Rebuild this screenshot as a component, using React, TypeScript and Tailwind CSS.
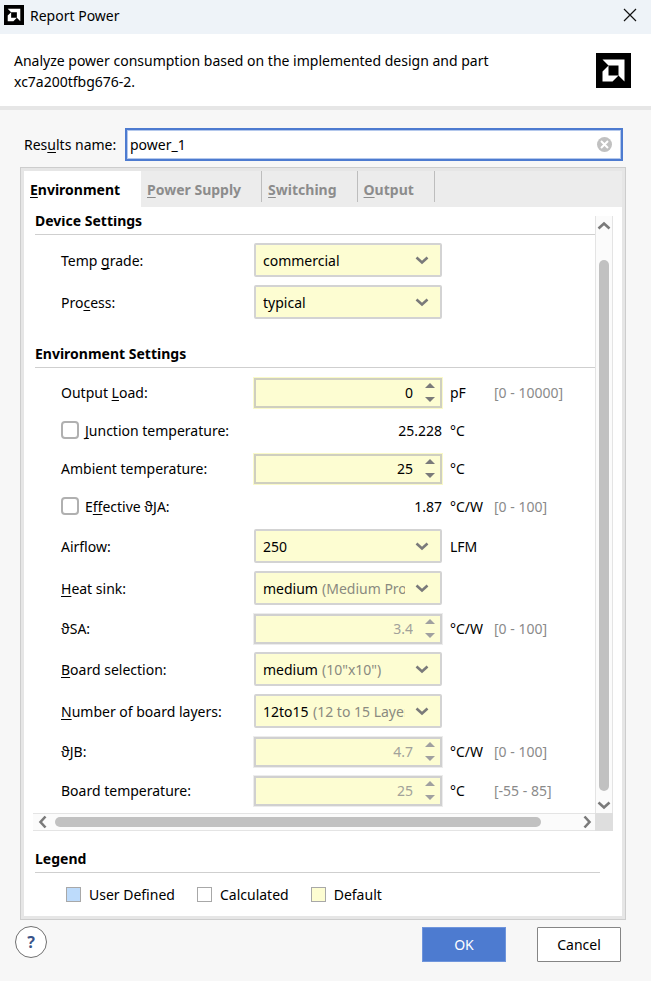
import { useState } from "react";
import type { ReactNode } from "react";

function Logo({ className }: { className: string }) {
  return (
    <svg viewBox="0 0 35 35" className={className} aria-hidden="true">
      <rect width="35" height="35" fill="#000" />
      <path d="M6.500 6.500h22v22l-6-6v-10h-10z" fill="#fff" />
      <path d="M12.500 12.500v10h10l-6 6h-10v-10z" fill="#fff" />
    </svg>
  );
}

function Chevron({ className }: { className: string }) {
  return (
    <svg viewBox="0 0 14 14" className={className} aria-hidden="true">
      <path d="M1.500 4.500 7 9.500l5.500-5" fill="none" stroke="#7a7a7a" strokeWidth="2.600" />
    </svg>
  );
}

/* Label text with its mnemonic letter wrapped in underscores: "Temp _g_rade:" */
function Mnemonic({ text }: { text: string }) {
  const [before, key, after] = text.split("_");
  return (
    <>
      {before}
      {key && <span className="underline [text-decoration-skip-ink:none] underline-offset-2">{key}</span>}
      {after}
    </>
  );
}

function Row({
  id,
  label,
  unit,
  range,
  height,
  children,
}: {
  id: string;
  label: string;
  unit?: string;
  range?: string;
  height: string;
  children: ReactNode;
}) {
  return (
    <div className={`grid grid-cols-[193px_188px_44px_1fr] pl-[26px] ${height}`}>
      <label htmlFor={id} className="self-center">
        <Mnemonic text={label} />
      </label>
      {children}
      <span className="self-center whitespace-nowrap pl-2">{unit}</span>
      <span className="self-center whitespace-nowrap pl-2 text-[#8a8a8a]">{range}</span>
    </div>
  );
}

function SelectRow({
  id,
  label,
  value,
  hint,
  hintLeft = "",
  unit,
}: {
  id: string;
  label: string;
  value: string;
  hint?: string;
  hintLeft?: string;
  unit?: string;
}) {
  return (
    <Row id={id} label={label} unit={unit} height="h-[35px]">
      <div className="relative h-[34px]">
        <select
          id={id}
          className="size-full appearance-none rounded-[2px] border-2 border-[#d3d3d3] bg-[#fdfdd2] pt-px pl-[7px] outline-none"
        >
          <option>{value}</option>
        </select>
        {hint && (
          <span
            className={`pointer-events-none absolute inset-y-0 right-[37px] flex items-center overflow-hidden whitespace-nowrap pt-px text-[#8a8a80] ${hintLeft}`}
          >
            {hint}
          </span>
        )}
        <Chevron className="pointer-events-none absolute top-[10px] right-[13px] size-[14px]" />
      </div>
    </Row>
  );
}

function SpinRow({
  id,
  label,
  value,
  unit,
  range,
  disabled = false,
}: {
  id: string;
  label: string;
  value: string;
  unit: string;
  range?: string;
  disabled?: boolean;
}) {
  const arrow = disabled ? "#a0a0a0" : "#7a7a7a";
  return (
    <Row id={id} label={label} unit={unit} range={range} height="h-8">
      <div
        className={`my-px flex border-2 bg-[#fdfdd2] ring-1 ${
          disabled ? "border-[#d0d0d0] ring-[#ececec]" : "border-[#cfcfc0] ring-[#fafac8]"
        }`}
      >
        <input
          id={id}
          type="text"
          defaultValue={value}
          disabled={disabled}
          className="min-w-0 flex-1 bg-transparent pr-3 text-right outline-none disabled:text-[#a2a29a]"
        />
        <div className="flex w-[15px] flex-col justify-center gap-[3px] pb-[2px]">
          <button type="button" aria-label="Increase" disabled={disabled} className="h-[10px]">
            <svg viewBox="0 0 10 10" className="size-[10px]">
              <path d="M0 7 5 2l5 5z" fill={arrow} />
            </svg>
          </button>
          <button type="button" aria-label="Decrease" disabled={disabled} className="h-[10px]">
            <svg viewBox="0 0 10 10" className="size-[10px]">
              <path d="M0 3 5 8l5-5z" fill={arrow} />
            </svg>
          </button>
        </div>
      </div>
    </Row>
  );
}

function CheckRow({
  id,
  label,
  value,
  unit,
  range,
}: {
  id: string;
  label: string;
  value: string;
  unit: string;
  range?: string;
}) {
  return (
    <div className="grid h-[30px] grid-cols-[193px_188px_44px_1fr] items-center pl-[26px]">
      <div className="flex items-center gap-[6px]">
        <input
          id={id}
          type="checkbox"
          className="mb-[3px] size-[18px] appearance-none rounded-[4px] border-2 border-[#b0b0b0] bg-white checked:bg-[#4d7bd0]"
        />
        <label htmlFor={id}>
          <Mnemonic text={label} />
        </label>
      </div>
      <output htmlFor={id} className="text-right">
        {value}
      </output>
      <span className="whitespace-nowrap pl-2">{unit}</span>
      <span className="whitespace-nowrap pl-2 text-[#8a8a8a]">{range}</span>
    </div>
  );
}

function Heading({ children }: { children: ReactNode }) {
  return <h2 className="h-6 border-b border-[#cfcfcf] leading-5 font-bold">{children}</h2>;
}

function Swatch({ color, children }: { color: string; children: ReactNode }) {
  return (
    <li className="flex items-center gap-2">
      <span className={`mb-[2px] size-[15px] border border-[#a8a8a8] ${color}`} />
      {children}
    </li>
  );
}

const tabs = ["_E_nvironment", "_P_ower Supply", "_S_witching", "_O_utput"];

export default function App() {
  const [name, setName] = useState("power_1");

  return (
    <div className="flex min-h-screen flex-col bg-[#f7f7f7] font-['Noto_Sans','Open_Sans',sans-serif] text-[14px] leading-5 text-black">
      <header className="flex h-[34px] items-center bg-[#eef3f8] pr-[14px] pl-1">
        <Logo className="mb-1 size-5" />
        <h1 className="mb-[2px] flex-1 pl-[6px]">Report Power</h1>
        <button type="button" aria-label="Close" className="mb-1">
          <svg viewBox="0 0 14 14" className="size-[14px]">
            <path d="m1 1 12 12M13 1 1 13" stroke="#111" strokeWidth="1.200" />
          </svg>
        </button>
      </header>

      <section className="flex h-[76px] items-start justify-between border-b-4 border-[#e6e6e6] bg-white pr-5 pl-[14px]">
        <p className="max-w-[500px] pt-4 leading-[21px]">
          Analyze power consumption based on the implemented design and part xc7a200tfbg676-2.
        </p>
        <Logo className="mt-[19px] size-[35px]" />
      </section>

      <main className="pr-[25px] pl-5">
        <div className="flex items-center pt-[18px] pr-[3px] pl-1">
          <label htmlFor="results" className="w-[101px] pt-px">
            <Mnemonic text="Res_u_lts name:" />
          </label>
          <div className="flex h-[33px] flex-1 items-center border-2 border-[#4d7bd0] bg-white pr-[9px] inset-ring inset-ring-[#b4c8ec]">
            <input
              id="results"
              type="text"
              value={name}
              onChange={(event) => setName(event.target.value)}
              className="min-w-0 flex-1 bg-transparent pt-px pl-[3px] outline-none"
            />
            <button type="button" aria-label="Clear" onClick={() => setName("")}>
              <svg viewBox="0 0 15 15" className="size-[15px]">
                <circle cx="7.500" cy="7.500" r="7.500" fill="#c1c1c1" />
                <path d="m4 4 7 7M11 4l-7 7" stroke="#fff" strokeWidth="2" />
              </svg>
            </button>
          </div>
        </div>

        <div className="mt-[6px] border border-[#cdcdcd] bg-[#e6e6e6] p-[3px]">
          <div role="tablist" className="flex h-9 bg-[#ececec] font-bold text-[#8c8c8c]">
            {tabs.map((tab, index) =>
              index === 0 ? (
                <button
                  key={tab}
                  type="button"
                  role="tab"
                  aria-selected="true"
                  className="w-[117px] bg-white pt-px pl-[6px] text-left text-black"
                >
                  <Mnemonic text={tab} />
                </button>
              ) : (
                <button
                  key={tab}
                  type="button"
                  role="tab"
                  aria-selected="false"
                  className="mb-[5px] border-r border-[#bdbdbd] pt-[6px] pr-5 pl-[6px] text-left"
                >
                  <Mnemonic text={tab} />
                </button>
              ),
            )}
          </div>

          <div className="bg-white pt-[9px] pb-[11px]">
            <div className="mr-[9px] ml-[9px] grid grid-cols-[1fr_18px]">
              <div className="h-[597px] overflow-hidden pl-[2px]">
                <div className="-mt-[5px] flex flex-col gap-[7px]">
                  <Heading>Device Settings</Heading>
                  <div className="mt-px flex flex-col gap-[7px]">
                    <SelectRow id="grade" label="Temp _g_rade:" value="commercial" />
                    <SelectRow id="process" label="Pro_c_ess:" value="typical" />
                  </div>
                  <div className="mt-[17px]">
                    <Heading>Environment Settings</Heading>
                  </div>
                  <div className="mt-[2px] flex flex-col gap-[7px]">
                    <SpinRow id="load" label="Output _L_oad:" value="0" unit="pF" range="[0 - 10000]" />
                    <CheckRow id="junction" label="_J_unction temperature:" value="25.228" unit="°C" />
                    <SpinRow id="ambient" label="Ambient temperature:" value="25" unit="°C" />
                    <CheckRow id="ja" label="E_f_fective ϑJA:" value="1.87" unit="°C/W" range="[0 - 100]" />
                    <SelectRow id="airflow" label="Airflow:" value="250" unit="LFM" />
                    <SelectRow
                      id="sink"
                      label="_H_eat sink:"
                      value="medium"
                      hint="(Medium Profile)"
                      hintLeft="left-[68px]"
                    />
                    <SpinRow id="sa" label="ϑSA:" value="3.4" unit="°C/W" range="[0 - 100]" disabled />
                    <SelectRow
                      id="board"
                      label="_B_oard selection:"
                      value="medium"
                      hint={'(10"x10")'}
                      hintLeft="left-[68px]"
                    />
                    <SelectRow
                      id="layers"
                      label="_N_umber of board layers:"
                      value="12to15"
                      hint="(12 to 15 Layers)"
                      hintLeft="left-[59px]"
                    />
                    <SpinRow id="jb" label="ϑJB:" value="4.7" unit="°C/W" range="[0 - 100]" disabled />
                    <SpinRow
                      id="btemp"
                      label="Board temperature:"
                      value="25"
                      unit="°C"
                      range="[-55 - 85]"
                      disabled
                    />
                  </div>
                </div>
              </div>

              <div className="flex flex-col items-center border-x border-[#e4e4e4] bg-[#fbfbfb]">
                <Chevron className="mt-[3px] mb-[27px] size-[14px] rotate-180" />
                <div className="w-[10px] flex-1 rounded-full bg-[#c1c1c1]" />
                <Chevron className="mt-[7px] mb-[1px] size-[14px]" />
              </div>

              <div className="flex h-[18px] items-center border-y border-[#e4e4e4] bg-[#fbfbfb] pr-px pl-[3px]">
                <Chevron className="size-[14px] rotate-90" />
                <div className="mr-[39px] ml-[5px] h-[10px] flex-1 rounded-full bg-[#c1c1c1]" />
                <Chevron className="size-[14px] -rotate-90" />
              </div>
              <div className="bg-[#dedede]" />
            </div>

            <div className="mt-[18px] mr-[22px] ml-[11px]">
              <Heading>Legend</Heading>
              <ul className="mt-3 flex gap-[22px] pl-[31px]">
                <Swatch color="bg-[#bddbfb]">User Defined</Swatch>
                <Swatch color="bg-white">Calculated</Swatch>
                <Swatch color="bg-[#fdfdd2]">Default</Swatch>
              </ul>
            </div>
          </div>
        </div>
      </main>

      <footer className="flex items-start pt-[6px] pr-[30px] pl-[15px]">
        <button
          type="button"
          aria-label="Help"
          className="size-8 rounded-full border border-[#707070] bg-white text-[16px] font-bold text-[#3a5488]"
        >
          ?
        </button>
        <div className="ml-auto flex gap-[31px] pt-px">
          <button type="button" className="h-[35px] w-[84px] border border-[#6f95dc] bg-[#4d7bd0] text-white">
            OK
          </button>
          <button type="button" className="h-[35px] w-[84px] rounded-[1px] border border-[#858585] bg-white">
            Cancel
          </button>
        </div>
      </footer>
    </div>
  );
}
